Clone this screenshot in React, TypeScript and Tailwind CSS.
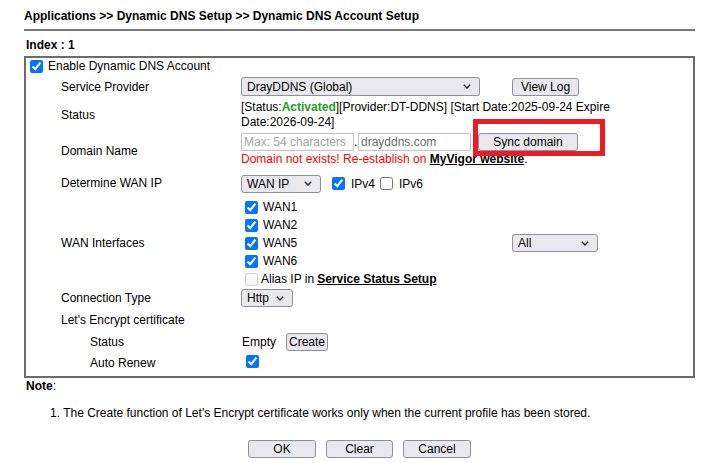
import React from "react";

function Chevron() {
  return (
    <svg width="8" height="5" viewBox="0 0 8 5" className="shrink-0">
      <path d="M0.8 0.8 L4 4 L7.2 0.8" fill="none" stroke="#222" strokeWidth="1.4" />
    </svg>
  );
}

function Select(props: { value: string; className: string }) {
  return (
    <div
      className={`flex items-center justify-between rounded-[3px] border border-[#8f8f9d] bg-[#e9e9ed] pl-[5px] pr-[8px] leading-[14px] ${props.className}`}
    >
      <span>{props.value}</span>
      <Chevron />
    </div>
  );
}

function Btn(props: { children: React.ReactNode; className: string }) {
  return (
    <button
      className={`flex items-center justify-center rounded-[3px] border border-[#8f8f9d] bg-[#e9e9ed] leading-[14px] ${props.className}`}
    >
      {props.children}
    </button>
  );
}

function Check(props: { checked?: boolean; disabled?: boolean; className?: string }) {
  return (
    <input
      type="checkbox"
      defaultChecked={props.checked}
      disabled={props.disabled}
      className={`m-0 h-[13px] w-[13px] shrink-0 accent-[#0075ff] ${props.className ?? ""}`}
    />
  );
}

function Row(props: { label: string; h: string; sub?: boolean; labelClass?: string; children?: React.ReactNode }) {
  return (
    <div className={`flex items-center ${props.h}`}>
      <div className={`w-[215px] shrink-0 ${props.sub ? "pl-[64px]" : "pl-[35px]"} ${props.labelClass ?? ""}`}>
        {props.label}
      </div>
      <div className="flex-1">{props.children}</div>
    </div>
  );
}

export default function App() {
  const wans = ["WAN1", "WAN2", "WAN5", "WAN6"];
  return (
    <div className="relative h-[463px] w-[711px] overflow-hidden bg-white font-['Liberation_Sans',Arial,sans-serif] text-[12px] leading-[14px] text-black">
      <div className="ml-[24px] w-[671px]">
        <div className="h-[29px] pt-[9px] font-bold">
          Applications &gt;&gt; Dynamic DNS Setup &gt;&gt; Dynamic DNS Account Setup
        </div>
        <div className="h-[2px] bg-[#7a7a7a]" />
        <div className="h-[25px] pl-[2px] pt-[7px] font-bold">Index : 1</div>

        <div className="border-2 border-[#6b6b6b] pb-[3px]">
          <div className="flex h-[16px] items-center gap-[5px] pl-[4px]">
            <Check checked />
            <span>Enable Dynamic DNS Account</span>
          </div>

          <Row label="Service Provider" h="h-[25px]">
            <div className="flex items-center">
              <Select value="DrayDDNS (Global)" className="h-[19px] w-[239px]" />
              <Btn className="ml-[32px] h-[18px] w-[67px]">View Log</Btn>
            </div>
          </Row>

          <Row label="Status" h="h-[31px]">
            <div className="leading-[15px]">
              [Status:<span className="font-bold text-[#1e9e1e]">Activated</span>][Provider:DT-DDNS] [Start
              Date:2025-09-24 Expire
              <br />
              Date:2026-09-24]
            </div>
          </Row>

          <Row label="Domain Name" h="h-[38px]" labelClass="pt-[3px]">
            <div className="flex flex-col">
              <div className="flex h-[18px] items-center">
                <input
                  placeholder="Max: 54 characters"
                  className="h-[18px] w-[113px] border border-[#c4c4c4] bg-white px-[2px] placeholder:text-[#a6a6a6]"
                />
                <span className="w-[4px]">.</span>
                <input
                  readOnly
                  value="drayddns.com"
                  className="h-[18px] w-[113px] border border-[#c4c4c4] bg-white px-[2px] text-[#6d6d6d]"
                />
                <Btn className="ml-[7px] h-[18px] w-[100px]">Sync domain</Btn>
              </div>
              <div className="pt-[1px] text-[#ff0000]">
                Domain not exists! Re-establish on{" "}
                <span className="font-bold text-black underline">MyVigor website</span>
                <span className="text-black">.</span>
              </div>
            </div>
          </Row>

          <Row label="Determine WAN IP" h="h-[30px]">
            <div className="flex items-center pt-[1px]">
              <Select value="WAN IP" className="h-[18px] w-[80px]" />
              <Check checked className="ml-[11px]" />
              <span className="ml-[6px]">IPv4</span>
              <Check className="ml-[5px]" />
              <span className="ml-[6px]">IPv6</span>
            </div>
          </Row>

          <Row label="WAN Interfaces" h="h-[90px]">
            <div className="flex items-center">
              <div className="w-[271px] shrink-0">
                {wans.map((w) => (
                  <div key={w} className="flex h-[18px] items-center pl-[4px]">
                    <Check checked />
                    <span className="ml-[5px]">{w}</span>
                  </div>
                ))}
                <div className="flex h-[18px] items-center pl-[4px]">
                  <Check disabled />
                  <span className="ml-[3px]">Alias IP in</span>
                  <span className="ml-[3px] font-bold underline">Service Status Setup</span>
                </div>
              </div>
              <Select value="All" className="h-[18px] w-[86px]" />
            </div>
          </Row>

          <Row label="Connection Type" h="h-[20px]">
            <Select value="Http" className="h-[18px] w-[52px]" />
          </Row>

          <Row label="Let's Encrypt certificate" h="h-[23px]" />

          <Row label="Status" h="h-[21px]" sub>
            <div className="flex items-center">
              <span className="ml-[1px]">Empty</span>
              <Btn className="ml-[10px] h-[18px] w-[42px]">Create</Btn>
            </div>
          </Row>

          <Row label="Auto Renew" h="h-[21px]" sub>
            <Check checked className="ml-[5px]" />
          </Row>
        </div>

        <div className="mt-[1px] pl-[2px]">
          <span className="font-bold">Note</span>:
        </div>
        <div className="mt-[13px] pl-[26px]">
          1. The Create function of Let's Encrypt certificate works only when the current profile has been stored.
        </div>

        <div className="mt-[20px] flex justify-center gap-[10px]">
          <Btn className="h-[18px] w-[68px]">OK</Btn>
          <Btn className="h-[18px] w-[67px]">Clear</Btn>
          <Btn className="h-[18px] w-[68px]">Cancel</Btn>
        </div>
      </div>

      <div className="pointer-events-none absolute left-[473px] top-[119px] h-[37px] w-[132px] border-[5px] border-[#ec1c24]" />
    </div>
  );
}
